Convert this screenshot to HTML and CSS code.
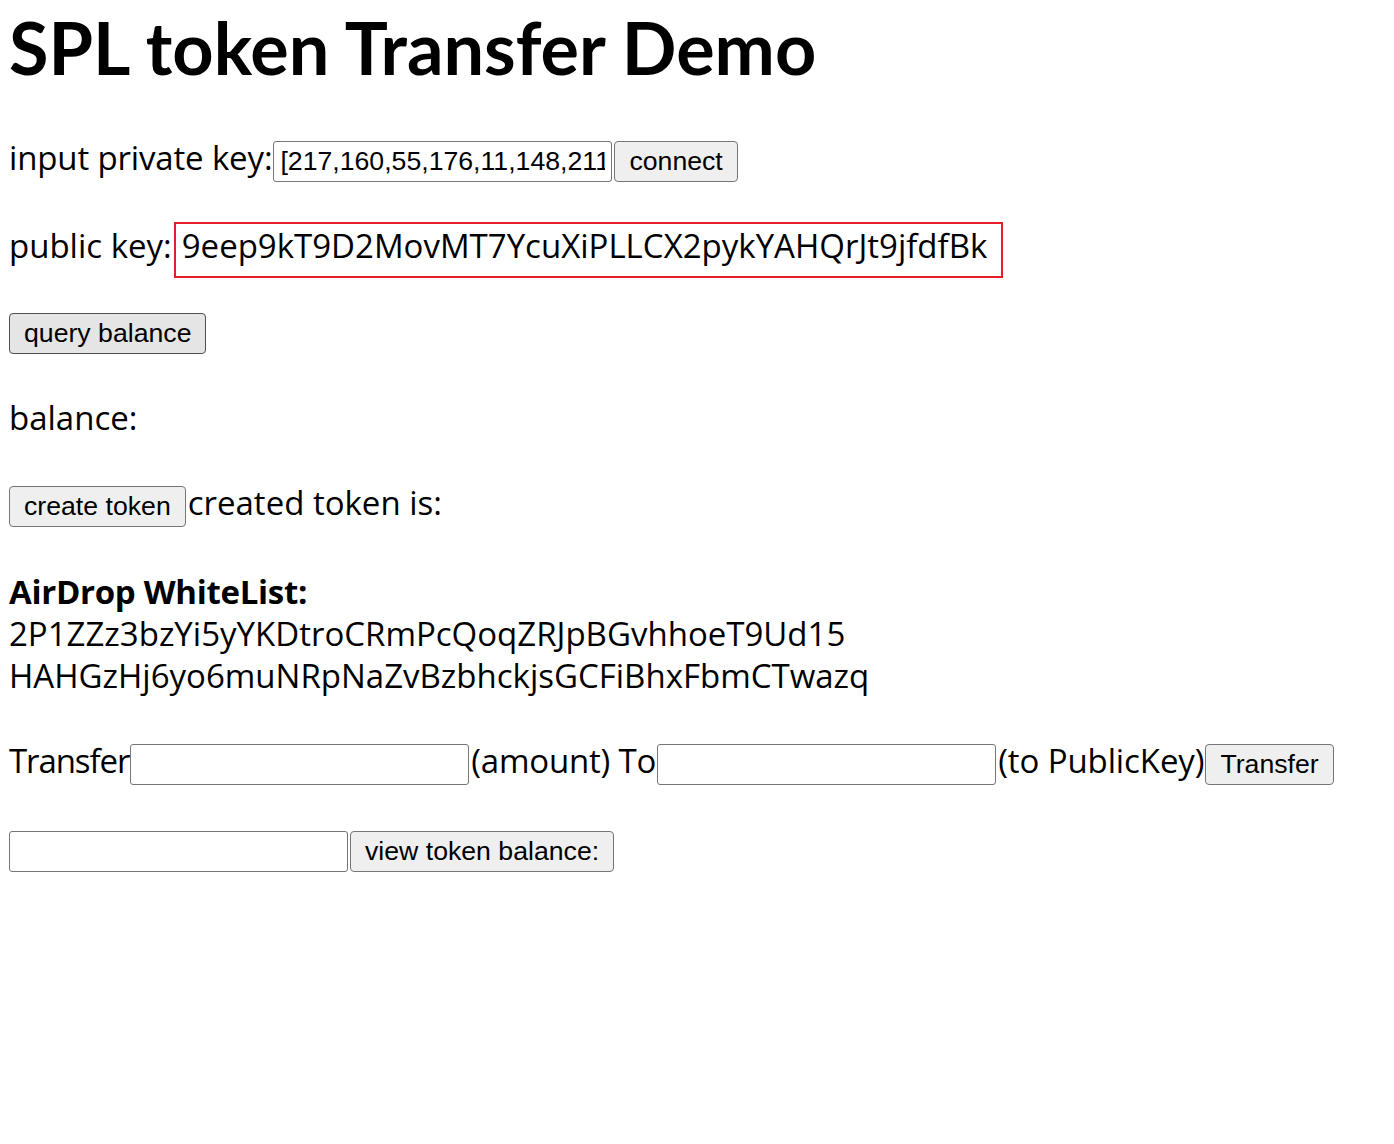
FILE: index.html
```html
<!DOCTYPE html>
<html>
<head>
<meta charset="utf-8">
<title>SPL token Transfer Demo</title>
<link rel="stylesheet" href="styles.css">
</head>
<body>
<h1 class="title">SPL token Transfer Demo</h1>

<div class="row row-key">
  <span class="label label-key">input private key:</span><input class="field" type="text" value="[217,160,55,176,11,148,211,95,12,44,201,8,77,19]"><button class="btn">connect</button>
</div>

<div class="row row-pub">
  <span class="label">public key:</span><span class="pubkey">9eep9kT9D2MovMT7YcuXiPLLCX2pykYAHQrJt9jfdfBk</span>
</div>

<div class="row row-query">
  <button class="btn btn-hover">query balance</button>
</div>

<div class="row row-balance">
  <span class="label">balance:</span>
</div>

<div class="row row-create">
  <button class="btn">create token</button><span class="label">created token is:</span>
</div>

<div class="whitelist">
  <div class="wl-title">AirDrop WhiteList:</div>
  <div class="wl-item">2P1ZZz3bzYi5yYKDtroCRmPcQoqZRJpBGvhhoeT9Ud15</div>
  <div class="wl-item">HAHGzHj6yo6muNRpNaZvBzbhckjsGCFiBhxFbmCTwazq</div>
</div>

<div class="row row-transfer">
  <span class="label label-transfer">Transfer</span><input class="field" type="text"><span class="label label-amount">(amount) To</span><input class="field" type="text"><span class="label label-to">(to PublicKey)</span><button class="btn">Transfer</button>
</div>

<div class="row row-view">
  <input class="field" type="text"><button class="btn">view token balance:</button>
</div>
</body>
</html>
```
FILE: styles.css
```css
html, body {
  background: #ffffff;
}
body {
  margin: 8px;
  color: #000000;
  font-family: "Open Sans", "Noto Sans", sans-serif;
  font-size: 33px;
  line-height: 42px;
}
.title {
  margin: 0 0 0 1px;
  font-family: Lato, "Open Sans", sans-serif;
  font-weight: 700;
  font-size: 72px;
  line-height: 78px;
  white-space: nowrap;
}
.row {
  display: flex;
  align-items: baseline;
  white-space: nowrap;
}
.label {
  line-height: 42px;
  margin-left: 1px;
}
.label-key {
  letter-spacing: -0.15px;
}
.label-transfer {
  letter-spacing: -1.1px;
}
.label-amount {
  letter-spacing: -0.2px;
}
.label-to {
  letter-spacing: -0.1px;
}
.row-key { margin-top: 51px; }
.row-pub { margin-top: 40px; }
.row-query { margin-top: 35px; }
.row-balance { margin-top: 43px; }
.row-create { margin-top: 43px; }
.whitelist { margin-top: 44px; margin-left: 1px; }
.row-transfer { margin-top: 43px; }
.row-view { margin-top: 46px; }

.wl-title {
  font-weight: 700;
  letter-spacing: -0.3px;
}
.wl-item:first-of-type {
  letter-spacing: 0;
}
.field {
  box-sizing: border-box;
  width: 339px;
  height: 41px;
  margin: 0 1px;
  padding: 0 6px;
  border: 1px solid #767676;
  border-radius: 3px;
  background: #ffffff;
  color: #000000;
  font-family: "Liberation Sans", Arial, sans-serif;
  font-size: 26.67px;
}
.btn {
  box-sizing: border-box;
  height: 41px;
  margin: 0 1px;
  padding: 0 14px;
  border: 1px solid #767676;
  border-radius: 4px;
  background: #efefef;
  color: #000000;
  font-family: "Liberation Sans", Arial, sans-serif;
  font-size: 26.67px;
}
.btn-hover {
  background: #e5e5e5;
  border-color: #4f4f4f;
}
.pubkey {
  display: inline-block;
  margin-left: 2px;
  padding: 1px 14px 9px 6px;
  border: 2px solid #e51f28;
  line-height: 42px;
}
```
